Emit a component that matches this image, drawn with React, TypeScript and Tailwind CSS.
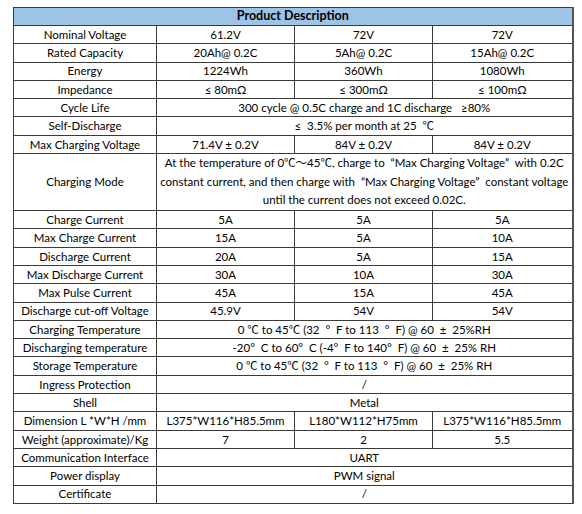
const cell = 'border border-[#3a3a3a] text-center align-middle p-0 whitespace-nowrap';

type Row = { label: string; values: string[] };

const rows: Row[] = [
  { label: 'Nominal Voltage', values: ['61.2V', '72V', '72V'] },
  { label: 'Rated Capacity', values: ['20Ah@ 0.2C', '5Ah@ 0.2C', '15Ah@ 0.2C'] },
  { label: 'Energy', values: ['1224Wh', '360Wh', '1080Wh'] },
  { label: 'Impedance', values: ['≤ 80mΩ', '≤ 300mΩ', '≤ 100mΩ'] },
  { label: 'Cycle Life', values: ['300 cycle @ 0.5C charge and 1C discharge \u00a0 ≥80%'] },
  { label: 'Self-Discharge', values: ['≤ \u00a03.5% per month at 25 \u00a0℃'] },
  { label: 'Max Charging Voltage', values: ['71.4V ± 0.2V', '84V ± 0.2V', '84V ± 0.2V'] },
  { label: 'Charging Mode', values: [] },
  { label: 'Charge Current', values: ['5A', '5A', '5A'] },
  { label: 'Max Charge Current', values: ['15A', '5A', '10A'] },
  { label: 'Discharge Current', values: ['20A', '5A', '15A'] },
  { label: 'Max Discharge Current', values: ['30A', '10A', '30A'] },
  { label: 'Max Pulse Current', values: ['45A', '15A', '45A'] },
  { label: 'Discharge cut-off Voltage', values: ['45.9V', '54V', '54V'] },
  { label: 'Charging Temperature', values: ['0 ℃ to 45℃ (32 \u00a0° \u00a0F to 113 \u00a0° \u00a0F) @ 60 \u00a0± \u00a025%RH'] },
  { label: 'Discharging temperature', values: ['-20° \u00a0C to 60° \u00a0C (-4° \u00a0F to 140° \u00a0F) @ 60 \u00a0± \u00a025% RH'] },
  { label: 'Storage Temperature', values: ['0 ℃ to 45℃ (32 \u00a0° \u00a0F to 113 \u00a0° \u00a0F) @ 60 \u00a0± \u00a025% RH'] },
  { label: 'Ingress Protection', values: ['/'] },
  { label: 'Shell', values: ['Metal'] },
  { label: 'Dimension L *W*H /mm', values: ['L375*W116*H85.5mm', 'L180*W112*H75mm', 'L375*W116*H85.5mm'] },
  { label: 'Weight (approximate)/Kg', values: ['7', '2', '5.5'] },
  { label: 'Communication Interface', values: ['UART'] },
  { label: 'Power display', values: ['PWM signal'] },
  { label: 'Certificate', values: ['/'] },
];

export default function App() {
  return (
    <div
      className="w-[582px] h-[514px] bg-white pl-[13px] pt-[7px] text-black text-[11.5px]"
      style={{ fontFamily: "Lato, 'Noto Sans CJK SC', sans-serif" }}
    >
      <table className="table-fixed border-collapse w-[559px] border-r-2 border-r-[#555]">
        <colgroup>
          <col className="w-[143px]" />
          <col className="w-[138px]" />
          <col className="w-[138px]" />
          <col className="w-[140px]" />
        </colgroup>
        <tbody>
          <tr className="h-[18px]">
            <td colSpan={4} className={`${cell} leading-none bg-[#9dc3e6] font-bold text-[12.5px]`}>
              Product Description
            </td>
          </tr>
          {rows.map((row) =>
            row.label === 'Charging Mode' ? (
              <tr key={row.label} className="h-[57px]">
                <td className={`${cell} leading-none`}>{row.label}</td>
                <td colSpan={3} className={`${cell} leading-[18.5px]`}>
                  At the temperature of 0℃～45℃, charge to &nbsp;“Max Charging Voltage” &nbsp;with 0.2C
                  <br />
                  constant current, and then charge with &nbsp;“Max Charging Voltage” &nbsp;constant voltage
                  <br />
                  until the current does not exceed 0.02C.
                </td>
              </tr>
            ) : (
              <tr key={row.label} className="h-[18.3px]">
                <td className={`${cell} leading-none`}>{row.label}</td>
                {row.values.length === 1 ? (
                  <td colSpan={3} className={`${cell} leading-none`}>
                    {row.values[0]}
                  </td>
                ) : (
                  row.values.map((v, i) => (
                    <td key={i} className={`${cell} leading-none`}>
                      {v}
                    </td>
                  ))
                )}
              </tr>
            ),
          )}
        </tbody>
      </table>
    </div>
  );
}
